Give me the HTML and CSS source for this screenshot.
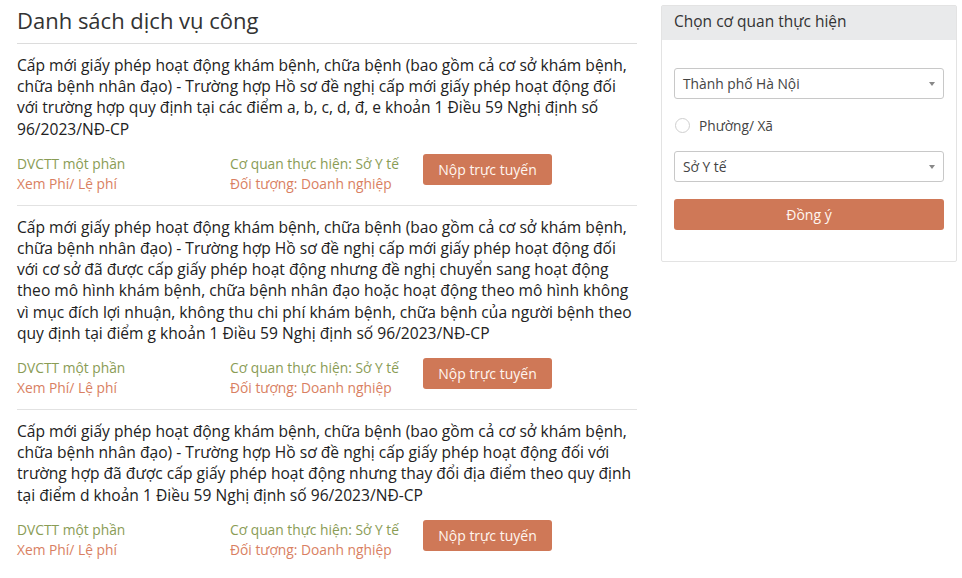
FILE: index.html
```html
<!DOCTYPE html>
<html lang="vi">
<head>
<meta charset="utf-8">
<title>Danh sách dịch vụ công</title>
<link rel="stylesheet" href="styles.css">
</head>
<body>
<div class="page">
  <main class="list">
    <h1 class="list-title">Danh sách dịch vụ công</h1>
    <div class="item">
      <p class="item-name">Cấp mới giấy phép hoạt động khám bệnh, chữa bệnh (bao gồm cả cơ sở khám bệnh, chữa bệnh nhân đạo) - Trường hợp Hồ sơ đề nghị cấp mới giấy phép hoạt động đối với trường hợp quy định tại các điểm a, b, c, d, đ, e khoản 1 Điều 59 Nghị định số 96/2023/NĐ-CP</p>
      <div class="meta">
        <div class="meta-col meta-col-1"><span class="green">DVCTT một phần</span><span class="orange">Xem Phí/ Lệ phí</span></div>
        <div class="meta-col meta-col-2"><span class="green">Cơ quan thực hiện: Sở Y tế</span><span class="orange">Đối tượng: Doanh nghiệp</span></div>
        <button class="btn-submit">Nộp trực tuyến</button>
      </div>
    </div>
    <div class="item">
      <p class="item-name">Cấp mới giấy phép hoạt động khám bệnh, chữa bệnh (bao gồm cả cơ sở khám bệnh, chữa bệnh nhân đạo) - Trường hợp Hồ sơ đề nghị cấp mới giấy phép hoạt động đối với cơ sở đã được cấp giấy phép hoạt động nhưng đề nghị chuyển sang hoạt động theo mô hình khám bệnh, chữa bệnh nhân đạo hoặc hoạt động theo mô hình không vì mục đích lợi nhuận, không thu chi phí khám bệnh, chữa bệnh của người bệnh theo quy định tại điểm g khoản 1 Điều 59 Nghị định số 96/2023/NĐ-CP</p>
      <div class="meta">
        <div class="meta-col meta-col-1"><span class="green">DVCTT một phần</span><span class="orange">Xem Phí/ Lệ phí</span></div>
        <div class="meta-col meta-col-2"><span class="green">Cơ quan thực hiện: Sở Y tế</span><span class="orange">Đối tượng: Doanh nghiệp</span></div>
        <button class="btn-submit">Nộp trực tuyến</button>
      </div>
    </div>
    <div class="item">
      <p class="item-name">Cấp mới giấy phép hoạt động khám bệnh, chữa bệnh (bao gồm cả cơ sở khám bệnh, chữa bệnh nhân đạo) - Trường hợp Hồ sơ đề nghị cấp giấy phép hoạt động đối với trường hợp đã được cấp giấy phép hoạt động nhưng thay đổi địa điểm theo quy định tại điểm d khoản 1 Điều 59 Nghị định số 96/2023/NĐ-CP</p>
      <div class="meta">
        <div class="meta-col meta-col-1"><span class="green">DVCTT một phần</span><span class="orange">Xem Phí/ Lệ phí</span></div>
        <div class="meta-col meta-col-2"><span class="green">Cơ quan thực hiện: Sở Y tế</span><span class="orange">Đối tượng: Doanh nghiệp</span></div>
        <button class="btn-submit">Nộp trực tuyến</button>
      </div>
    </div>
  </main>
  <aside class="panel">
    <div class="panel-head">Chọn cơ quan thực hiện</div>
    <div class="panel-body">
      <div class="select"><span>Thành phố Hà Nội</span><span class="caret"></span></div>
      <label class="radio"><span class="radio-circle"></span><span>Phường/ Xã</span></label>
      <div class="select"><span>Sở Y tế</span><span class="caret"></span></div>
      <button class="btn-agree">Đồng ý</button>
    </div>
  </aside>
</div>
</body>
</html>
```

FILE: styles.css
```css
* { box-sizing: border-box; }
html, body { margin: 0; padding: 0; background: #fff; }
body {
  font-family: "Open Sans", "Liberation Sans", sans-serif;
  color: #333;
}
.page {
  display: flex;
  align-items: flex-start;
  gap: 24px;
  padding: 5px 0 0 17px;
}
.list { width: 620px; }
.list-title {
  margin: 0;
  font-size: 22px;
  font-weight: 400;
  line-height: 30px;
  padding: 0 0 8px;
  color: #333;
  border-bottom: 1px solid #dcdcdc;
}
.item {
  padding: 11px 0 11px;
  border-bottom: 1px solid #e2e2e2;
}
.item:last-child { border-bottom: none; }
.item-name {
  margin: 0;
  font-size: 15.6px;
  line-height: 21.2px;
  color: #222;
}
.meta {
  display: flex;
  align-items: flex-start;
  margin-top: 14px;
  font-size: 13.8px;
  line-height: 20px;
}
.meta-col { display: flex; flex-direction: column; }
.meta-col-1 { width: 213px; }
.meta-col-2 { width: 193px; }
.green { color: #8a9c55; }
.orange { color: #d97f62; }
.btn-submit {
  margin-top: 0;
  width: 129px;
  height: 31px;
  border: none;
  border-radius: 3px;
  background: #cf7857;
  color: #fff6f0;
  font-family: inherit;
  font-size: 14px;
  padding: 0;
}
.panel {
  width: 296px;
  border: 1px solid #e3e3e3;
  border-radius: 2px;
}
.panel-head {
  background: #e9eaeb;
  height: 34px;
  padding: 0 12px;
  font-size: 15.5px;
  line-height: 31px;
  color: #333;
}
.panel-body {
  padding: 28px 12px 31px;
  display: flex;
  flex-direction: column;
}
.select {
  height: 31px;
  border: 1px solid #c8c8c8;
  border-radius: 3px;
  display: flex;
  align-items: center;
  justify-content: space-between;
  padding: 0 8px 0 8px;
  font-size: 13.8px;
  color: #444;
}
.caret {
  width: 0; height: 0;
  border-left: 3px solid transparent;
  border-right: 3px solid transparent;
  border-top: 4px solid #888;
}
.radio {
  display: flex;
  align-items: center;
  gap: 9px;
  height: 22px;
  margin: 15px 0 15px 1px;
  font-size: 13.7px;
  color: #444;
}
.radio-circle {
  width: 15px; height: 15px;
  border: 1px solid #cfcfcf;
  border-radius: 50%;
}
.btn-agree {
  margin-top: 17px;
  height: 31px;
  border: none;
  border-radius: 3px;
  background: #cf7857;
  color: #fff6f0;
  font-family: inherit;
  font-size: 14px;
}
```
